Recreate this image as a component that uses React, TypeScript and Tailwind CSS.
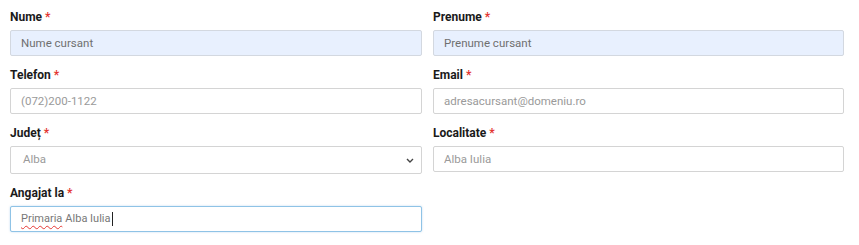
import { ReactNode } from "react";

interface FieldProps {
    label: string;
    children: ReactNode;
}

const Field = ({ label, children }: FieldProps) => (
    <div className="pt-[7px] pb-[2px]">
        <div className="h-5 mb-[3px] flex items-center text-[12px] font-bold text-[#1a1a1a]">
            {label}
            <span className="text-[#e3342f] ml-[3px]">*</span>
        </div>
        {children}
    </div>
);

const inputBase =
    "block w-full h-[26px] border rounded-[2px] px-[10px] text-[11.5px] font-normal outline-none";

export default function App() {
    return (
        <div
            className="bg-white w-[859px] h-[245px] pl-[10px]"
            style={{ fontFamily: "Roboto, 'Liberation Sans', sans-serif" }}
        >
            <div className="grid grid-cols-[412px_411px] gap-x-[11px]">
                <Field label="Nume">
                    <input
                        readOnly
                        placeholder="Nume cursant"
                        className={`${inputBase} bg-[#e8f0fe] border-[#d3d8e0] placeholder-[#6f6f6f]`}
                    />
                </Field>
                <Field label="Prenume">
                    <input
                        readOnly
                        placeholder="Prenume cursant"
                        className={`${inputBase} bg-[#e8f0fe] border-[#d3d8e0] placeholder-[#6f6f6f]`}
                    />
                </Field>
                <Field label="Telefon">
                    <input
                        readOnly
                        placeholder="(072)200-1122"
                        className={`${inputBase} bg-white border-[#d4d4d4] placeholder-[#9a9a9a]`}
                    />
                </Field>
                <Field label="Email">
                    <input
                        readOnly
                        placeholder="adresacursant@domeniu.ro"
                        className={`${inputBase} bg-white border-[#d4d4d4] placeholder-[#9a9a9a]`}
                    />
                </Field>
                <Field label="Județ">
                    <div className="relative h-[28px] border border-[#d4d4d4] rounded-[2px] bg-white flex items-center pl-[12px] text-[11.5px] text-[#9a9a9a]">
                        Alba
                        <svg
                            className="absolute right-[7px] top-[11px]"
                            width="8"
                            height="5"
                            viewBox="0 0 8 5"
                            fill="none"
                        >
                            <path d="M1 1l3 3 3-3" stroke="#444" strokeWidth="1.4" />
                        </svg>
                    </div>
                </Field>
                <Field label="Localitate">
                    <input
                        readOnly
                        placeholder="Alba Iulia"
                        className={`${inputBase} bg-white border-[#d4d4d4] placeholder-[#9a9a9a]`}
                    />
                </Field>
                <Field label="Angajat la">
                    <div className="h-[26px] border border-[#8fc3e6] rounded-[2px] bg-white flex items-center px-[10px] text-[11px] text-[#777] shadow-[0_0_2px_rgba(120,180,230,0.5)]">
                        <span className="underline decoration-wavy decoration-[#e53935] decoration-[1px] underline-offset-[3px]">
                            Primaria
                        </span>
                        <span className="ml-[3px]">Alba Iulia</span>
                        <span className="inline-block w-px h-[14px] bg-[#222] ml-px" />
                    </div>
                </Field>
            </div>
        </div>
    );
}
